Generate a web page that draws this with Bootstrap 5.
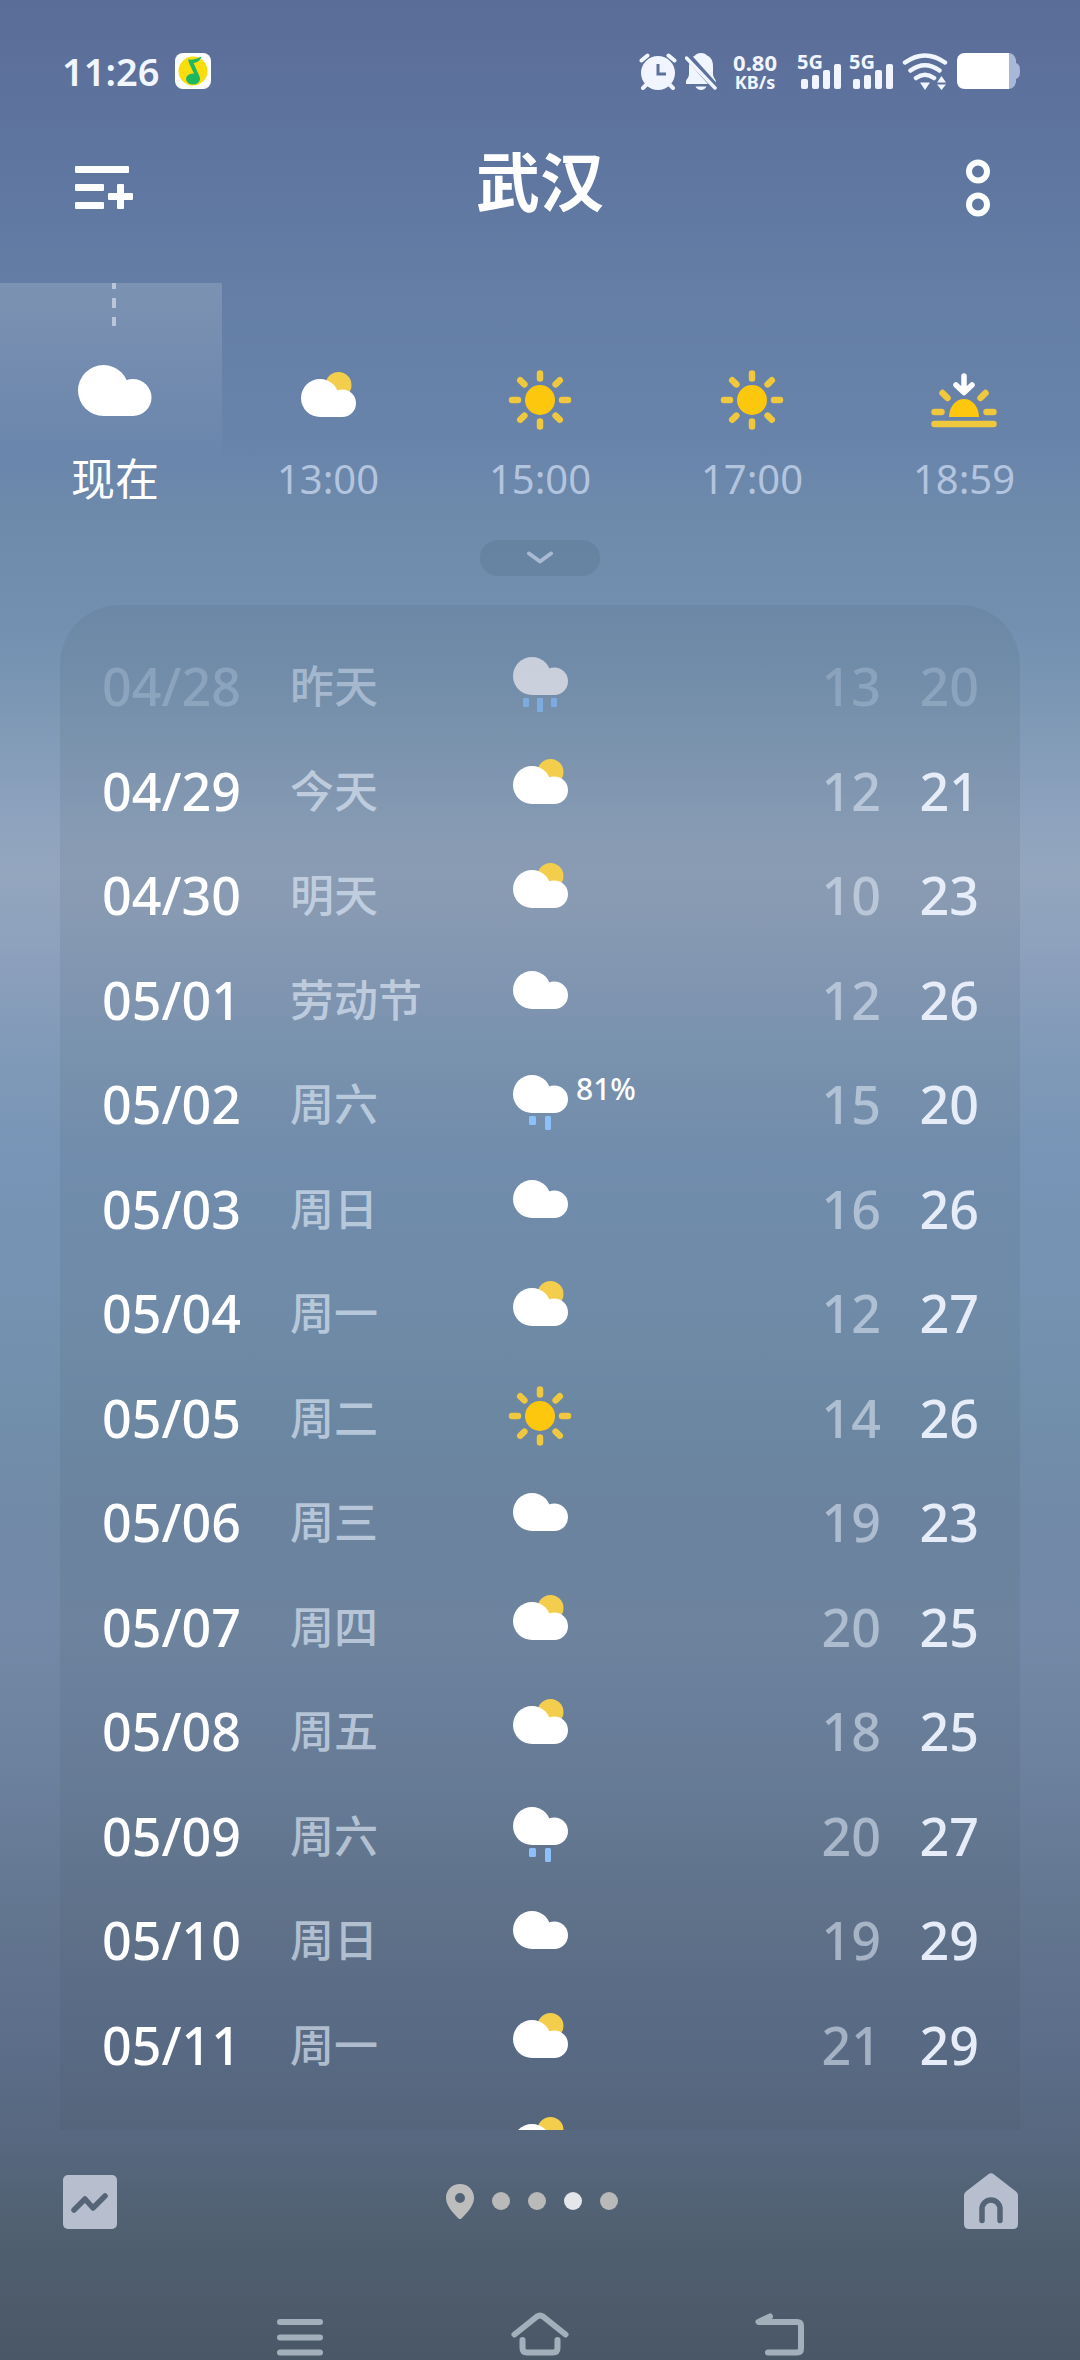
<!DOCTYPE html>
<html lang="zh-CN">
<head>
<meta charset="utf-8">
<meta name="viewport" content="width=device-width, initial-scale=1">
<title>武汉</title>
<link href="https://cdn.jsdelivr.net/npm/bootstrap@5.3.0/dist/css/bootstrap.min.css" rel="stylesheet">
<style>
  body {
    font-family: "Noto Sans", "Noto Sans CJK SC", sans-serif;
    color: #fff;
    background: linear-gradient(180deg,
      #5a6c98 0%, #5e759f 6%, #647ea5 12.5%, #6984ab 19%, #6d8aab 21.5%,
      #7390b1 26.5%, #7d98b5 30%, #8fa3be 35%, #93a6be 37%, #8ea1bd 40%,
      #7f99b8 45%, #7894b6 49%, #7693b3 54%, #718eab 60%, #718aa8 64%,
      #7389a7 69%, #6c819e 75%, #637690 81%, #5b6d88 87%, #56677e 91%,
      #505f6f 95%, #4a5767 100%);
  }
  svg { display: block; }
  .icon-btn { padding: 0; border: 0; background: none; color: inherit; }

  .status-bar { padding: 53px 60px 0 62px; height: 89px; color: #f1f5ff; }
  .clock { font-size: 38px; font-weight: 600; line-height: 36px; }
  .speed { font-size: 22px; font-weight: 700; line-height: 18px; }
  .speed-unit { font-size: 18px; line-height: 22px; }
  .sim { font-size: 20px; font-weight: 700; line-height: 18px; }
  .sim svg { margin: -8px 0 0 4px; }

  .city-bar { padding: 55px 75px 51px; }
  .city-name { font-family: "Noto Sans CJK SC", sans-serif; font-size: 64px; font-weight: 700; line-height: 68px; padding-bottom: 20px; }

  .hours { padding-right: 10px; height: 257px; }
  .hour { height: 230px; padding-top: 82px; color: #b3c4df; }
  .hour-now {
    flex: 0 0 222px; position: relative; padding-left: 8px; color: #fff;
    background: linear-gradient(180deg, rgba(255,255,255,.16), rgba(255,255,255,.06) 50%, rgba(255,255,255,0) 80%);
  }
  .now-mark {
    position: absolute; top: 0; left: 112px; width: 4px; height: 44px;
    background: repeating-linear-gradient(180deg, #b9c6da 0 6px, transparent 6px 15px, #b9c6da 15px 25px, transparent 25px 34px, #b9c6da 34px 43px, transparent 43px 44px);
  }
  .hour-label { font-size: 40px; font-weight: 400; line-height: 60px; margin-top: 20px; }
  .hour-now .hour-label { font-family: "Noto Sans CJK SC", sans-serif; font-size: 44px; line-height: 56px; }

  .expander { width: 120px; height: 36px; border-radius: 18px; background: rgba(72,98,122,.22); color: #a9bad4; }

  .forecast {
    margin: 29px 60px 0; padding: 29px 41px 0 42px; min-height: 0;
    border-radius: 60px 60px 0 0; background: rgba(60,80,90,.11);
  }
  .forecast table { table-layout: fixed; width: 100%; }
  .forecast tr { height: 104px; }
  .forecast tr:nth-child(even) { height: 105px; }
  .forecast th, .forecast td { padding: 0; vertical-align: middle; font-size: 52px; font-weight: 500; line-height: 60px; white-space: nowrap; }
  .c-date { width: 188px; } .c-day { width: 218px; } .c-icon { width: 68px; } .c-low { width: 120px; } .c-high { width: 98px; }
  .forecast .day { font-family: "Noto Sans CJK SC", sans-serif; font-size: 44px; padding-bottom: 4px; color: rgba(222,232,246,.66); }
  .forecast .low { color: rgba(225,233,246,.56); text-align: right; }
  .forecast .high { color: #e6edf8; text-align: right; }
  .forecast .rain { font-size: 30px; padding-bottom: 30px; line-height: 32px; }
  .forecast .past th, .forecast .past .low, .forecast .past .high { color: rgba(205,218,240,.28); }
  .forecast .past .day { color: rgba(222,232,246,.48); }
  .past svg { opacity: .68; }

  .pager-bar { padding: 42px 61px 0 62px; height: 140px; color: #b7bfce; }
  .pager { gap: 18px; padding-right: 18px; }
  .dot { width: 18px; height: 18px; border-radius: 50%; background: #b9b9b9; }
  .dot.on { background: #e4e6e9; }
  .sys-nav { padding: 0 180px; height: 90px; color: #a3afbb; }
</style>
<script src="https://cdn.jsdelivr.net/npm/bootstrap@5.3.0/dist/js/bootstrap.bundle.min.js"></script>
</head>
<body class="vh-100 d-flex flex-column overflow-hidden">

<svg width="0" height="0" class="position-absolute" aria-hidden="true">
  <defs>
    <g id="cloud"><circle cx="19" cy="19" r="19"/><circle cx="41.300" cy="24.300" r="13.700"/><rect x="19" y="19" width="22.300" height="19"/></g>
    <g id="bars" fill="currentColor"><rect y="16" width="7" height="10" rx="2"/><rect x="11" y="12" width="7" height="14" rx="2"/><rect x="22" y="7" width="7" height="19" rx="2"/><rect x="33" y="1" width="7" height="25" rx="2"/></g>
    <symbol id="i-cloudy" viewBox="0 0 64 64"><use href="#cloud" x="5" y="3" fill="#fff"/></symbol>
    <symbol id="i-partly" viewBox="0 0 64 64"><circle cx="42.500" cy="13" r="13" fill="#f3ce4d"/><use href="#cloud" x="5" y="7" fill="#fff"/></symbol>
    <symbol id="i-rain" viewBox="0 0 64 64"><use href="#cloud" x="5" y="3" fill="#fff"/><g fill="#8dc0fb"><rect x="21" y="44" width="7" height="9" rx="1.500"/><rect x="37" y="44" width="6" height="14" rx="1.500"/></g></symbol>
    <symbol id="i-rain3" viewBox="0 0 64 64"><use href="#cloud" x="5" y="3" fill="#f3f0f4"/><g fill="#83b8f8"><rect x="15" y="44" width="6" height="9" rx="1"/><rect x="29" y="44" width="6" height="14" rx="1"/><rect x="43" y="44" width="6" height="9" rx="1"/></g></symbol>
    <symbol id="i-sun" viewBox="0 2 64 64"><circle cx="32" cy="32" r="15" fill="#fdc70d"/><path stroke="#efc83d" stroke-width="6.500" stroke-linecap="round" d="M32 5.500v5M32 53.500v5M4 32h6M54 32h6M12.200 12.200l4.200 4.200M47.600 47.600l4.200 4.200M12.200 51.800l4.200-4.200M47.600 16.400l4.200-4.200"/></symbol>
  </defs>
</svg>

<div class="status-bar d-flex justify-content-between align-items-start flex-shrink-0">
  <div class="d-flex align-items-center gap-3">
    <span class="clock">11:26</span>
    <svg width="36" height="36" viewBox="0 0 36 36"><rect width="36" height="36" rx="8" fill="#fff"/><circle cx="18" cy="18" r="14.500" fill="#fbdc0d"/><ellipse cx="18" cy="26" rx="7" ry="5.500" fill="#1eb761"/><path fill="#1eb761" d="M13 6.500c5 .5 9-.5 13.500-3-1 3.500-4 6-8 6.500l4.500 10c1 2 2 4 1.500 7l-3-1-7-15z"/></svg>
  </div>
  <div class="d-flex align-items-start">
    <svg width="38" height="37" viewBox="0 0 38 37"><g stroke="currentColor" stroke-linecap="round" fill="none"><path stroke-width="4" d="M2.500 7.500l6-5M35.500 7.500l-6-5"/><path stroke-width="4" d="M8 31l-4 4M30 31l4 4"/></g><circle cx="19" cy="20" r="17" fill="currentColor"/><path d="M19 11v10h8" fill="none" stroke="#5c729d" stroke-width="3"/></svg>
    <svg class="ms-2" width="32" height="37" viewBox="0 0 32 37"><path fill="currentColor" d="M16 0c3 0 5 1 6 2.500 4.500 2 6 6 6 10.500v8c0 4 3 5 3 8v2H1v-2c0-3 3-4 3-8v-8c0-5 2-8.500 6-10.500C11 1 13 0 16 0zM10.500 33.500h11c-1 2-3 3.500-5.500 3.500s-4.500-1.500-5.500-3.500z"/><path d="M0 0l33 37" stroke="#5c729d" stroke-width="7"/><path d="M1.500 5L30 35" stroke="currentColor" stroke-width="3.500" stroke-linecap="round"/></svg>
    <div class="text-center mx-3 pe-1"><div class="speed">0.80</div><div class="speed speed-unit">KB/s</div></div>
    <div class="sim"><div>5G</div><svg width="40" height="26" viewBox="0 0 40 26"><use href="#bars"/></svg></div>
    <div class="ms-2 sim"><div>5G</div><svg width="40" height="26" viewBox="0 0 40 26"><use href="#bars"/></svg></div>
    <svg class="ms-2" width="48" height="37" viewBox="0 0 48 37"><g fill="none" stroke="currentColor" stroke-width="4.500" stroke-linecap="round"><path d="M4 9.500Q24-4.500 44 9.500M9.500 17.500Q24 7 38.500 17.500M15 25Q24 18.500 33 25"/></g><path fill="currentColor" d="M19 29.500h10L24 37zM36 29.500l4.500-6.500 4.500 6.500zM36 31.500h9L40.500 37z"/></svg>
    <svg class="ms-2" width="63" height="36" viewBox="0 0 63 36"><path fill="#a8b8d8" d="M48 0h3c5 0 7 3 8 7v3c3 1 4 3 4 8s-1 7-4 8v3c-1 4-3 7-8 7h-3z"/><path fill="#fff" d="M8 0h44v36H8c-5 0-8-3-8-8V8c0-5 3-8 8-8z"/></svg>
  </div>
</div>

<header class="city-bar d-flex justify-content-between align-items-center flex-shrink-0">
  <button class="icon-btn" aria-label="城市列表"><svg width="58" height="44" viewBox="0 0 58 44" fill="#fbfdff"><rect width="54" height="7" rx="1"/><rect y="18" width="29" height="7" rx="1"/><rect y="36" width="29" height="7" rx="1"/><rect x="33" y="27" width="25" height="7" rx="1"/><rect x="42" y="18" width="7" height="25" rx="1"/></svg></button>
  <h1 class="city-name m-0">武汉</h1>
  <button class="icon-btn" aria-label="更多"><svg width="58" height="58" viewBox="0 0 58 58" fill="none" stroke="#fbfdff" stroke-width="6"><circle cx="31" cy="12.500" r="9"/><circle cx="31" cy="45.500" r="9"/></svg></button>
</header>

<section class="hours d-flex text-center flex-shrink-0">
  <div class="hour hour-now"><span class="now-mark"></span><svg class="mx-auto" width="74" height="64" viewBox="0 0 74 64"><g fill="#fff"><circle cx="25.500" cy="25.500" r="25.500"/><circle cx="55" cy="32.500" r="18.500"/><rect x="25" y="25" width="30" height="26"/></g></svg><div class="hour-label">现在</div></div>
  <div class="hour flex-fill w-25"><svg class="mx-auto" width="64" height="64" viewBox="0 -7 64 64"><use href="#i-partly" width="64" height="64"/></svg><div class="hour-label">13:00</div></div>
  <div class="hour flex-fill w-25"><svg class="mx-auto" width="64" height="64" viewBox="0 -5 64 64" overflow="visible"><use href="#i-sun" width="64" height="64"/></svg><div class="hour-label">15:00</div></div>
  <div class="hour flex-fill w-25"><svg class="mx-auto" width="64" height="64" viewBox="0 -5 64 64" overflow="visible"><use href="#i-sun" width="64" height="64"/></svg><div class="hour-label">17:00</div></div>
  <div class="hour flex-fill w-25"><svg class="mx-auto" width="66" height="64" viewBox="0 0 66 64"><path fill="#fdc70d" d="M18 52a15 18 0 0 1 30 0z"/><path fill="none" stroke="#efc83d" stroke-width="6.500" stroke-linecap="round" d="M3.500 59h59M3.500 47h7M55.500 47h7M11.500 28l5 5M54.500 28l-5 5"/><path fill="none" stroke="#fff" stroke-width="5.500" stroke-linecap="round" stroke-linejoin="round" d="M33 11v15M25 20l8 7.500 8-7.500"/></svg><div class="hour-label">18:59</div></div>
</section>

<button class="icon-btn expander mx-auto d-flex align-items-center justify-content-center flex-shrink-0" aria-label="展开"><svg width="28" height="14" viewBox="0 0 28 14" fill="none" stroke="currentColor" stroke-width="4" stroke-linecap="round" stroke-linejoin="round"><path d="M3 2.500l11 8 11-8"/></svg></button>

<main class="forecast flex-grow-1 overflow-hidden">
  <table>
    <colgroup><col class="c-date"><col class="c-day"><col class="c-icon"><col><col class="c-low"><col class="c-high"></colgroup>
    <tbody>
      <tr class="past"><th scope="row">04/28</th><td class="day">昨天</td><td><svg width="64" height="64"><use href="#i-rain3"/></svg></td><td></td><td class="low">13</td><td class="high">20</td></tr>
      <tr><th scope="row">04/29</th><td class="day">今天</td><td><svg width="64" height="64"><use href="#i-partly"/></svg></td><td></td><td class="low">12</td><td class="high">21</td></tr>
      <tr><th scope="row">04/30</th><td class="day">明天</td><td><svg width="64" height="64"><use href="#i-partly"/></svg></td><td></td><td class="low">10</td><td class="high">23</td></tr>
      <tr><th scope="row">05/01</th><td class="day">劳动节</td><td><svg width="64" height="64"><use href="#i-cloudy"/></svg></td><td></td><td class="low">12</td><td class="high">26</td></tr>
      <tr><th scope="row">05/02</th><td class="day">周六</td><td><svg width="64" height="64"><use href="#i-rain"/></svg></td><td class="rain">81%</td><td class="low">15</td><td class="high">20</td></tr>
      <tr><th scope="row">05/03</th><td class="day">周日</td><td><svg width="64" height="64"><use href="#i-cloudy"/></svg></td><td></td><td class="low">16</td><td class="high">26</td></tr>
      <tr><th scope="row">05/04</th><td class="day">周一</td><td><svg width="64" height="64"><use href="#i-partly"/></svg></td><td></td><td class="low">12</td><td class="high">27</td></tr>
      <tr><th scope="row">05/05</th><td class="day">周二</td><td><svg width="64" height="64"><use href="#i-sun"/></svg></td><td></td><td class="low">14</td><td class="high">26</td></tr>
      <tr><th scope="row">05/06</th><td class="day">周三</td><td><svg width="64" height="64"><use href="#i-cloudy"/></svg></td><td></td><td class="low">19</td><td class="high">23</td></tr>
      <tr><th scope="row">05/07</th><td class="day">周四</td><td><svg width="64" height="64"><use href="#i-partly"/></svg></td><td></td><td class="low">20</td><td class="high">25</td></tr>
      <tr><th scope="row">05/08</th><td class="day">周五</td><td><svg width="64" height="64"><use href="#i-partly"/></svg></td><td></td><td class="low">18</td><td class="high">25</td></tr>
      <tr><th scope="row">05/09</th><td class="day">周六</td><td><svg width="64" height="64"><use href="#i-rain"/></svg></td><td></td><td class="low">20</td><td class="high">27</td></tr>
      <tr><th scope="row">05/10</th><td class="day">周日</td><td><svg width="64" height="64"><use href="#i-cloudy"/></svg></td><td></td><td class="low">19</td><td class="high">29</td></tr>
      <tr><th scope="row">05/11</th><td class="day">周一</td><td><svg width="64" height="64"><use href="#i-partly"/></svg></td><td></td><td class="low">21</td><td class="high">29</td></tr>
      <tr><th></th><td></td><td><svg width="64" height="64"><use href="#i-partly"/></svg></td><td></td><td></td><td></td></tr>
    </tbody>
  </table>
</main>

<div class="pager-bar d-flex justify-content-between align-items-start flex-shrink-0">
  <button class="icon-btn" aria-label="趋势"><svg width="56" height="58" viewBox="0 0 56 58"><rect x="1" y="3" width="54" height="54" rx="5" fill="currentColor"/><path d="M12 38l11-11 8 9 12-12" fill="none" stroke="#566477" stroke-width="5.500" stroke-linecap="round" stroke-linejoin="round"/></svg></button>
  <div class="pager d-flex align-items-center">
    <svg width="28" height="58" viewBox="0 0 28 58"><path fill="#bdbdbd" fill-rule="evenodd" d="M14 12c8 0 14 6 14 14 0 7-6 14-12.500 20.500q-1.500 1-3 0C6 40 0 33 0 26c0-8 6-14 14-14zm0 9a5 5 0 1 0 0 10 5 5 0 0 0 0-10z"/></svg>
    <span class="dot"></span><span class="dot"></span><span class="dot on"></span><span class="dot"></span>
  </div>
  <button class="icon-btn" aria-label="首页"><svg width="56" height="58" viewBox="0 0 56 58"><path fill="currentColor" d="M25 2.500q3-2.500 6 0l22 17q2 1.500 2 4V52q0 5-5 5H6q-5 0-5-5V23.500q0-2.500 2-4z"/><path d="M19 48.500V37a9 9 0 0 1 18 0v11.500" fill="none" stroke="#566477" stroke-width="5.500" stroke-linecap="round"/></svg></button>
</div>

<nav class="sys-nav d-flex flex-shrink-0 align-items-end">
  <button class="icon-btn flex-fill w-25" aria-label="最近任务"><svg class="mx-auto" width="46" height="50" viewBox="0 0 46 50" stroke="currentColor" stroke-width="6" stroke-linecap="round"><path d="M3 12h40M3 27.500h40M3 42.500h40"/></svg></button>
  <button class="icon-btn flex-fill w-25" aria-label="主屏幕"><svg class="mx-auto" width="58" height="50" viewBox="0 0 58 50" fill="none" stroke="currentColor" stroke-width="6" stroke-linecap="round" stroke-linejoin="round"><path d="M3.500 24.500L26 6.500q3-2 6 0l22.500 18M11.500 30v8q0 4.500 4.500 4.500h26q4.500 0 4.500-4.500v-8"/></svg></button>
  <button class="icon-btn flex-fill w-25" aria-label="返回"><svg class="mx-auto" width="50" height="50" viewBox="0 0 50 50" fill="none" stroke="currentColor" stroke-width="6" stroke-linecap="round" stroke-linejoin="round"><path d="M15 6.500L3.500 12H42q4 0 4 4v22.500q0 4-4 4H13"/></svg></button>
</nav>
</body>
</html>
